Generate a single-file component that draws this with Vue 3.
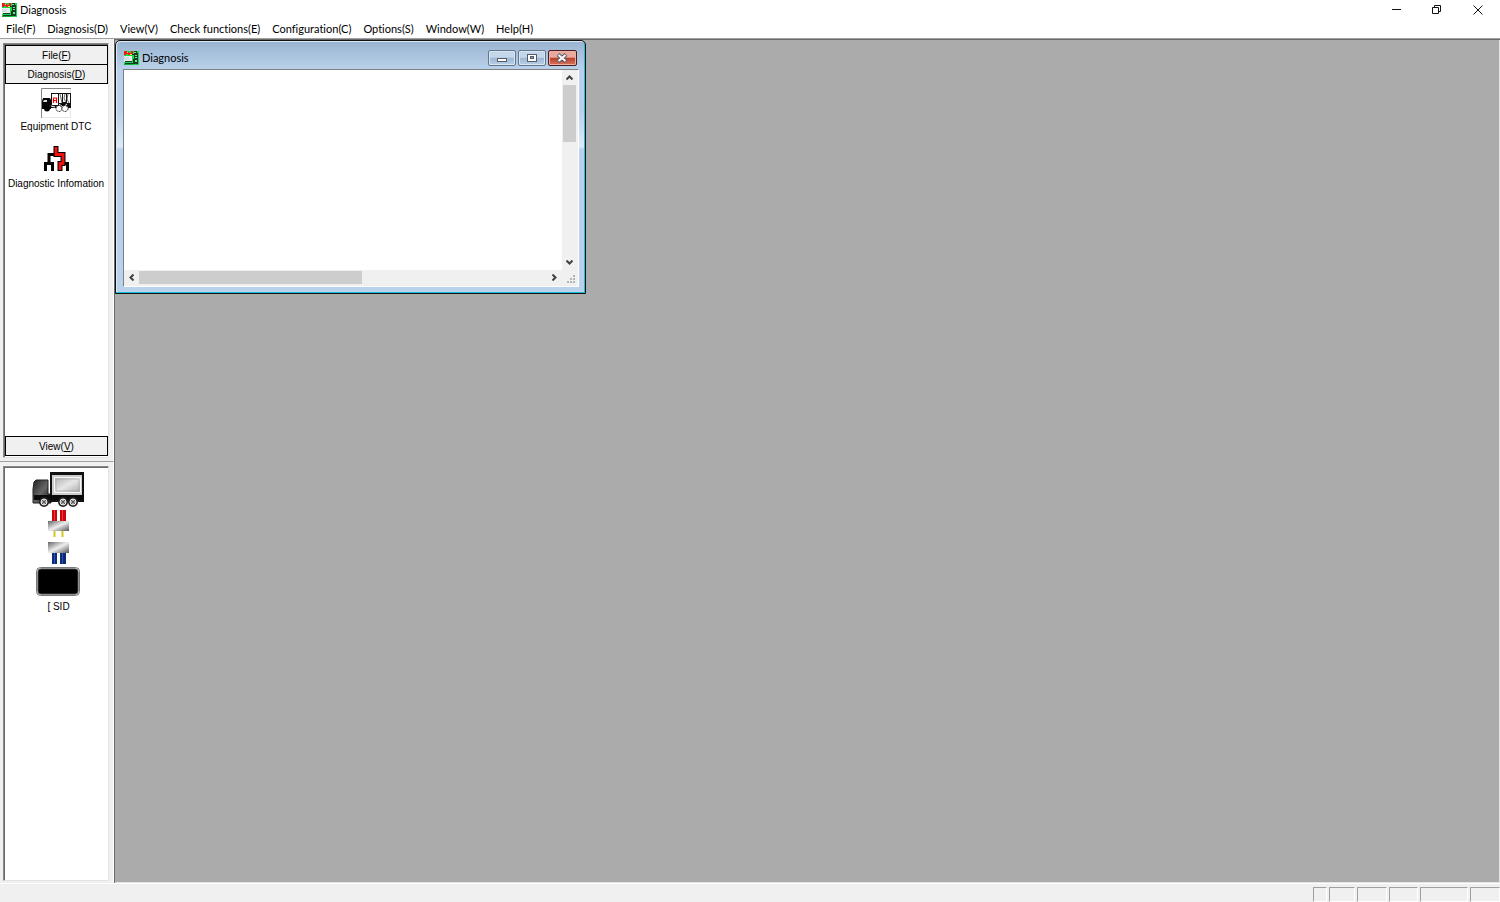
<script setup>
const menus = ['File(F)', 'Diagnosis(D)', 'View(V)', 'Check functions(E)', 'Configuration(C)', 'Options(S)', 'Window(W)', 'Help(H)']
const panes = ['w14', 'w26', 'w30', 'w29', 'w48', 'w30']
</script>

<template>
  <div class="app">
    <svg class="defs" aria-hidden="true">
      <symbol id="logo" viewBox="0 0 15 14">
        <rect width="15" height="14" fill="#18d848" />
        <path d="M0 0h3v1h2v1h2V0h2v3H6v1H4V3H2v1H0z" fill="#f01818" />
        <path d="M3 1h1v1H3zM6 3h2v1H6z" fill="#ffe040" />
        <path d="M0 5h8v6H0z" fill="#e4ecef" />
        <path d="M0 6h5v3H0z" fill="#cfdfe6" />
        <path d="M1 10h7v1H1zM1 12h8v1H1z" fill="#173f2a" />
        <path d="M10 0h3v2h1v11H9V8h1V4H8V3h2z" fill="#123d20" />
        <path d="M10 1h2v1h-2zM11 4h2v1h-2zM11 6h2v1h-2zM11 9h2v2h-2z" fill="#72e098" />
        <path d="M0 13h9v1H0z" fill="#0fae3c" />
      </symbol>
    </svg>

    <header class="titlebar">
      <svg class="logo"><use href="#logo" /></svg>
      <h1>Diagnosis</h1>
      <div class="sysbuttons">
        <button aria-label="Minimize"><svg width="10" height="10"><path d="M1 4.500h9" /></svg></button>
        <button aria-label="Restore"><svg width="10" height="10"><path d="M.5 2.500h6v6h-6zM2.500 2.500v-2h6v6h-2" /></svg></button>
        <button aria-label="Close"><svg width="10" height="10"><path d="M.5 .5l9 9M9.500 .5l-9 9" /></svg></button>
      </div>
    </header>

    <nav class="menubar">
      <button v-for="m in menus" :key="m">{{ m }}</button>
    </nav>

    <div class="body">
      <aside class="sidebar">
        <div class="upper">
          <div class="panel">
            <button class="group">File(<u>F</u>)</button>
            <button class="group">Diagnosis(<u>D</u>)</button>
            <div class="tools">
              <button class="tool">
                <svg width="30" height="30" viewBox="0 0 30 30">
                  <path d="M.5 30V.5H30" fill="none" stroke="#888" />
                  <path d="M29.500 1v29M1 29.500h29" fill="none" stroke="#e6e6e6" />
                  <path d="M10 5h20v14H10z" fill="#111" />
                  <path d="M11 6h6v11h-6zM18 6h3v9h-3zM22 6h3v8h-3zM26 6h3v9h-3z" fill="#fff" />
                  <path d="M19 6l2 9M24 6l-1 4 2 5M27 6l-1 5 2 4" stroke="#222" stroke-width=".7" fill="none" />
                  <path d="M12.500 15V10h3v5M12.500 12.500h3" stroke="#e00" fill="none" stroke-width="1.200" />
                  <path d="M2 10h7l1 2v9H1v-8z" fill="#050505" />
                  <path d="M3 12h3v2H2z" fill="#ddd" />
                  <path d="M7 17h23v3H7z" fill="#111" />
                  <path d="M10 18l4 1M18 16l4 3 4-3" stroke="#fff" />
                  <circle cx="6" cy="20.500" r="3" /><circle cx="18" cy="20.500" r="3" fill="#fff" stroke="#111" stroke-dasharray="2 1" /><circle cx="24" cy="20.500" r="3" fill="#fff" stroke="#111" stroke-dasharray="2 1" />
                </svg>
                <span>Equipment DTC</span>
              </button>
              <button class="tool">
                <svg width="30" height="30" viewBox="0 0 30 30" fill="none">
                  <path d="M14 9.500H8v8M4.500 26v-7.500h7V26" stroke="#000" stroke-width="3" />
                  <path d="M26.500 26v-7.500h-6" stroke="#000" stroke-width="3" />
                  <path d="M15 1v8.500h7v9h-3V26" stroke="#000" stroke-width="5" />
                  <path d="M15 2v7.500h7v9h-3V25" stroke="#f01010" stroke-width="3" />
                </svg>
                <span>Diagnostic Infomation</span>
              </button>
            </div>
            <button class="group last">View(<u>V</u>)</button>
          </div>
        </div>
        <div class="lower">
          <div class="panel device">
            <svg width="54" height="127" viewBox="0 0 54 127" role="img" aria-label="Vehicle connection">
              <defs>
                <linearGradient id="metal" x2="1" y2="1"><stop stop-color="#666" /><stop offset=".5" stop-color="#eee" /><stop offset="1" stop-color="#555" /></linearGradient>
                <linearGradient id="cargo" x2="1" y2="1"><stop stop-color="#b0b0b0" /><stop offset=".5" stop-color="#e6e6e6" /><stop offset="1" stop-color="#aaa" /></linearGradient>
                <linearGradient id="cab" x2="1" y2="1"><stop stop-color="#222" /><stop offset=".5" stop-color="#666" /><stop offset="1" stop-color="#111" /></linearGradient>
              </defs>
              <path d="M4 9h12v14h3v9H1V18l1-7z" fill="url(#cab)" stroke="#222" />
              <path d="M18 1h34v30H18z" fill="#111" />
              <path d="M20 4h30v20H20z" fill="#ccc" />
              <path d="M22.500 6.500h26v15h-26z" fill="url(#cargo)" stroke="#f8f8f8" />
              <path d="M24 8h23v12H24z" fill="none" stroke="#999" stroke-width=".5" />
              <path d="M2 24h50v5H2z" fill="#0b0b0b" />
              <g v-for="x in [12, 31, 41]" :key="x">
                <circle :cx="x" cy="31" r="5" fill="#222" />
                <circle :cx="x" cy="31" r="3" fill="#aaa" stroke="#eee" />
                <path :d="`M${x - 2} 29l4 4m0-4l-4 4`" stroke="#444" stroke-width=".8" />
              </g>
              <path d="M20 39h5v11h-5zM28 39h6v11h-6z" fill="#c8060e" />
              <path d="M22.500 39v11M30.500 39v11" stroke="#f03a3a" />
              <path d="M22.500 59v7M30.500 59v7" stroke="#d0c820" stroke-width="2" />
              <path d="M16 50h21v10H16z" fill="url(#metal)" />
              <path d="M20 81h5v12h-5zM28 81h6v12h-6z" fill="#0d2c74" />
              <path d="M22.500 81v12M30.500 81v12" stroke="#2356b8" />
              <path d="M16 71h21v11H16z" fill="url(#metal)" />
              <rect x="4.500" y="96.500" width="43" height="28" rx="4" fill="#ddd" stroke="#777" />
              <rect x="6" y="98" width="40" height="25" rx="3" fill="#000" stroke="#444" />
            </svg>
            <p>[ SID</p>
          </div>
        </div>
      </aside>

      <main class="workspace">
        <section class="child">
          <header class="childbar">
            <svg class="logo"><use href="#logo" /></svg>
            <h2>Diagnosis</h2>
            <div class="winbuttons">
              <button aria-label="Minimize window"><svg width="28" height="16"><rect x="9.500" y="8.500" width="9" height="3" fill="#fff" stroke="#555b68" /></svg></button>
              <button aria-label="Maximize window"><svg width="28" height="16"><rect x="9.500" y="4.500" width="9" height="7" fill="#fff" stroke="#555b68" /><rect x="12.500" y="6.500" width="3" height="2" fill="#83a6cb" stroke="#555b68" /></svg></button>
              <button class="close" aria-label="Close window"><svg width="28" height="16"><path d="M10 4.500l8 7M18 4.500l-8 7" stroke="#555b68" stroke-width="4" /><path d="M10.500 5l7 6M17.500 5l-7 6" stroke="#fff" stroke-width="2" /></svg></button>
            </div>
          </header>
          <div class="client">
            <div class="canvas"></div>
            <div class="vscroll">
              <button aria-label="Scroll up"><svg width="7" height="5"><path d="M.5 4.500l3-3 3 3" /></svg></button>
              <div class="vthumb"></div>
              <button class="end" aria-label="Scroll down"><svg width="7" height="5"><path d="M.5 .5l3 3 3-3" /></svg></button>
            </div>
            <div class="hscroll">
              <button aria-label="Scroll left"><svg width="5" height="7"><path d="M4.500 .5l-3 3 3 3" /></svg></button>
              <div class="hthumb"></div>
              <button class="end" aria-label="Scroll right"><svg width="5" height="7"><path d="M.5 .5l3 3-3 3" /></svg></button>
            </div>
            <div class="grip">
              <svg width="8" height="8" fill="#b5b5b5"><path d="M6 0h2v2H6zM3 3h2v2H3zM6 3h2v2H6zM0 6h2v2H0zM3 6h2v2H3zM6 6h2v2H6z" /></svg>
            </div>
          </div>
        </section>
      </main>
    </div>

    <footer class="status">
      <span v-for="(p, i) in panes" :key="i" :class="p"></span>
    </footer>
  </div>
</template>

<style>
body { margin: 0; }
</style>

<style scoped>
* { box-sizing: border-box; }
.app {
  height: 100vh; display: flex; flex-direction: column; overflow: hidden;
  background: #f0f0f0; color: #000; font: 11px/16px Lato, "Open Sans", sans-serif;
  font-variant-ligatures: none;
}
.defs { position: absolute; width: 0; height: 0; }
button { margin: 0; padding: 0; border: 0; background: none; color: inherit; font: inherit; font-variant-ligatures: none; }
svg { display: block; flex: none; }
h1, h2, p { margin: 0; font: inherit; }
.logo { width: 15px; height: 14px; }
.titlebar { height: 20px; flex: none; display: flex; align-items: center; gap: 3px; padding-left: 2px; background: #fff; }
.sysbuttons { margin-left: auto; display: flex; padding-right: 2px; }
.sysbuttons button { width: 41px; height: 18px; display: flex; align-items: center; justify-content: center; }
.sysbuttons path { fill: none; stroke: #111; }
.menubar { height: 18px; flex: none; display: flex; gap: 12px; padding: 0 6px; background: #fff; white-space: nowrap; }
.menubar button { line-height: 18px; }
.body { flex: 1; min-height: 0; display: flex; border-top: 1px solid #a0a0a0; }
.sidebar { width: 114px; flex: none; display: flex; flex-direction: column; font: 10px/12px "Liberation Sans", sans-serif; }
.upper { height: 423px; flex: none; padding: 4px 4px 3px 3px; border-right: 1px solid #fff; border-bottom: 1px solid #a0a0a0; }
.lower { flex: 1; min-height: 0; padding: 4px 4px 2px 3px; border-right: 1px solid #fff; }
.panel {
  height: 100%; display: flex; flex-direction: column; background: #fff;
  border: 1px solid; border-color: #888 #e3e3e3 #e3e3e3 #888; box-shadow: inset 1px 1px #696969;
}
.upper .panel { padding: 1px 0 1px 1px; }
.group { height: 20px; flex: none; background: #f0f0f0; border: 1px solid #000; padding-top: 1px; }
.group + .group { border-top: 0; height: 19px; }
.tools { flex: 1; display: flex; flex-direction: column; gap: 12px; padding: 4px 1px 0 0; }
.tool { display: flex; flex-direction: column; align-items: center; gap: 3px; white-space: nowrap; }
.device { align-items: center; gap: 3px; padding: 4px 0 0 5px; }
.workspace {
  position: relative; flex: 1; background: #ababab;
  border: solid #696969; border-width: 1px 0 0 1px; box-shadow: inset -1px -1px #e3e3e3;
}
.child {
  position: absolute; left: 0; top: 0; width: 471px; height: 254px; padding: 1px 6px 6px 7px;
  display: flex; flex-direction: column; border: 1px solid #111; border-radius: 5px 5px 0 0;
  background: linear-gradient(#99b4d1 0, #b9d1ea 28px, #b9d1ea 70px, #dcebf8 106px, #b9d1ea 108px);
  box-shadow: inset -1px -1px #19bfdc, inset 1px 1px #dce9f5;
}
.childbar { height: 27px; flex: none; display: flex; align-items: center; gap: 3px; padding: 4px 0 0 1px; }
.winbuttons { margin-left: auto; display: flex; gap: 2px; padding-right: 2px; }
.winbuttons button {
  width: 28px; height: 16px; border: 1px solid #64768c; border-radius: 2px; overflow: hidden;
  background: linear-gradient(#c4d7ea 0 45%, #9bb7d3 50%, #b9d0e8); box-shadow: inset 0 0 0 1px #d8e6f4;
}
.winbuttons svg { margin: -1px; }
.winbuttons .close { width: 29px; border-color: #4b1c22; background: linear-gradient(#e9a99c 0 45%, #b93e29 50%, #d6745f); box-shadow: inset 0 0 0 1px #eab2a5; }
.client {
  flex: 1; min-height: 0; display: grid; grid-template: 1fr 15px / 1fr 15px; background: #f0f0f0;
  border: 1px solid; border-color: #808080 #fff #fff #808080; padding: 0 1px 1px 0;
}
.canvas { background: #fff; }
.vscroll { display: flex; flex-direction: column; }
.hscroll { display: flex; }
.vscroll button, .hscroll button { width: 15px; height: 15px; display: flex; align-items: center; justify-content: center; }
.vscroll path, .hscroll path { fill: none; stroke: #404040; stroke-width: 2; }
.vthumb { height: 57px; width: 13px; margin-left: 1px; background: #cdcdcd; }
.hthumb { width: 223px; height: 13px; margin-top: 1px; background: #cdcdcd; }
.vscroll .end { margin-top: auto; }
.hscroll .end { margin-left: auto; }
.grip { display: flex; align-items: flex-end; justify-content: flex-end; padding: 2px; }
.status { height: 19px; flex: none; display: flex; justify-content: flex-end; gap: 2px; padding-top: 3px; border-top: 1px solid #fff; }
.status span { border: 1px solid; border-color: #a0a0a0 #fff #fff #a0a0a0; }
.w14 { width: 14px; }
.w26 { width: 26px; }
.w29 { width: 29px; }
.w30 { width: 30px; }
.w48 { width: 48px; }
</style>
